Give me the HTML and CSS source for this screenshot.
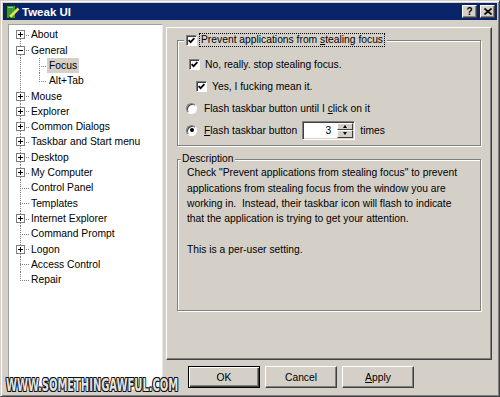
FILE: index.html
```html
<!DOCTYPE html>
<html>
<head>
<meta charset="utf-8">
<link rel="stylesheet" href="styles.css">
</head>
<body>
<div class="window">
  <div class="titlebar">
    <svg class="app-icon" width="16" height="16" viewBox="0 0 16 16">
      <path d="M2.5 1.5h9v13h-9z" fill="#3a9a3a" stroke="#0c3a0c"/>
      <path d="M4 3.5h5" stroke="#8fd88f"/>
      <path d="M6 13 L14.5 4.5" stroke="#e8e050" stroke-width="2.6"/>
      <path d="M4.6 14.8 L5.3 12.3 L7 14z" fill="#222"/>
    </svg>
    <span class="title">Tweak UI</span>
    <span class="tbtn help">?</span>
    <span class="tbtn close"><svg width="8" height="7" viewBox="0 0 8 7"><path d="M0.5 0.5L7.5 6.5M7.5 0.5L0.5 6.5" stroke="#000" stroke-width="1.6"/></svg></span>
  </div>
  <div class="main">
    <div class="tree">
      <div class="node"><span class="tw first"><span class="box"><svg width="7" height="7"><path d="M1 3.5H6M3.5 1V6" stroke="#000"/></svg></span></span><span class="lbl">About</span></div>
      <div class="node"><span class="tw"><span class="box"><svg width="7" height="7"><path d="M1 3.5H6" stroke="#000"/></svg></span></span><span class="lbl">General</span></div>
      <div class="node"><span class="tw vonly"></span><span class="tw2"></span><span class="lbl sel">Focus</span></div>
      <div class="node"><span class="tw vonly"></span><span class="tw2 last"></span><span class="lbl">Alt+Tab</span></div>
      <div class="node"><span class="tw"><span class="box"><svg width="7" height="7"><path d="M1 3.5H6M3.5 1V6" stroke="#000"/></svg></span></span><span class="lbl">Mouse</span></div>
      <div class="node"><span class="tw"><span class="box"><svg width="7" height="7"><path d="M1 3.5H6M3.5 1V6" stroke="#000"/></svg></span></span><span class="lbl">Explorer</span></div>
      <div class="node"><span class="tw"><span class="box"><svg width="7" height="7"><path d="M1 3.5H6M3.5 1V6" stroke="#000"/></svg></span></span><span class="lbl">Common Dialogs</span></div>
      <div class="node"><span class="tw"><span class="box"><svg width="7" height="7"><path d="M1 3.5H6M3.5 1V6" stroke="#000"/></svg></span></span><span class="lbl">Taskbar and Start menu</span></div>
      <div class="node"><span class="tw"><span class="box"><svg width="7" height="7"><path d="M1 3.5H6M3.5 1V6" stroke="#000"/></svg></span></span><span class="lbl">Desktop</span></div>
      <div class="node"><span class="tw"><span class="box"><svg width="7" height="7"><path d="M1 3.5H6M3.5 1V6" stroke="#000"/></svg></span></span><span class="lbl">My Computer</span></div>
      <div class="node"><span class="tw"></span><span class="lbl">Control Panel</span></div>
      <div class="node"><span class="tw"></span><span class="lbl">Templates</span></div>
      <div class="node"><span class="tw"><span class="box"><svg width="7" height="7"><path d="M1 3.5H6M3.5 1V6" stroke="#000"/></svg></span></span><span class="lbl">Internet Explorer</span></div>
      <div class="node"><span class="tw"></span><span class="lbl">Command Prompt</span></div>
      <div class="node"><span class="tw"><span class="box"><svg width="7" height="7"><path d="M1 3.5H6M3.5 1V6" stroke="#000"/></svg></span></span><span class="lbl">Logon</span></div>
      <div class="node"><span class="tw"></span><span class="lbl">Access Control</span></div>
      <div class="node"><span class="tw last"></span><span class="lbl">Repair</span></div>
    </div>
    <div class="right">
      <div class="pane">
        <div class="group g1">
          <div class="gtitle">
            <span class="cb"><svg width="7" height="7" viewBox="0 0 7 7"><path d="M0.6 3.2L2.6 5.2L6.4 1.2" fill="none" stroke="#000" stroke-width="1.7"/></svg></span>
            <span class="focus">Prevent applications from <u>s</u>tealing focus</span>
          </div>
          <div class="opts">
            <div class="opt i1"><span class="cb"><svg width="7" height="7" viewBox="0 0 7 7"><path d="M0.6 3.2L2.6 5.2L6.4 1.2" fill="none" stroke="#000" stroke-width="1.7"/></svg></span><span class="olbl">No, really. stop stealing focus.</span></div>
            <div class="opt i2"><span class="cb"><svg width="7" height="7" viewBox="0 0 7 7"><path d="M0.6 3.2L2.6 5.2L6.4 1.2" fill="none" stroke="#000" stroke-width="1.7"/></svg></span><span class="olbl">Yes, I fucking mean it.</span></div>
            <div class="opt r"><span class="rb"></span><span class="rlbl">Flash taskbar button until I <u>c</u>lick on it</span></div>
            <div class="opt r"><span class="rb on"><span class="dot"></span></span><span class="rlbl"><u>F</u>lash taskbar button</span>
              <span class="spin"><span class="spin-val">3</span><span class="spin-btns"><span class="sb"><span class="up"></span></span><span class="sb"><span class="down"></span></span></span></span>
              <span class="times">times</span>
            </div>
          </div>
        </div>
        <div class="group g2">
          <div class="gtitle dtitle">Description</div>
          <div class="desc">Check "Prevent applications from stealing focus" to prevent<br>applications from stealing focus from the window you are<br>working in.&nbsp; Instead, their taskbar icon will flash to indicate<br>that the application is trying to get your attention.<br><br>This is a per-user setting.</div>
        </div>
      </div>
      <div class="actions">
        <span class="btn default">OK</span>
        <span class="btn">Cancel</span>
        <span class="btn"><span><u>A</u>pply</span></span>
      </div>
    </div>
  </div>
  <div class="watermark">WWW.SOMETHINGAWFUL.COM</div>
</div>
</body>
</html>
```
FILE: styles.css
```css
body {
  margin: 0;
}
.window {
  width: 500px;
  height: 397px;
  box-sizing: border-box;
  background: #d4d0c8;
  border: 1px solid;
  border-color: #d4d0c8 #404040 #404040 #d4d0c8;
  box-shadow: inset 1px 1px #fff, inset -1px -1px #808080;
  padding: 2px;
  position: relative;
  font-family: "Liberation Sans", Arial, sans-serif;
  font-size: 10.3px;
  color: #000;
  display: flex;
  flex-direction: column;
  overflow: hidden;
}
.titlebar {
  height: 17px;
  background: #0a246a;
  display: flex;
  align-items: center;
  padding: 0 2px 0 1px;
  color: #fff;
  flex: none;
}
.app-icon {
  margin-right: 2px;
  flex: none;
}
.title {
  font-weight: bold;
  font-size: 11.5px;
  flex: 1;
}
.tbtn {
  width: 15px;
  height: 13px;
  box-sizing: border-box;
  background: #d4d0c8;
  border: 1px solid;
  border-color: #fff #404040 #404040 #fff;
  box-shadow: inset -1px -1px #808080;
  display: flex;
  align-items: center;
  justify-content: center;
  color: #000;
  font-weight: bold;
  font-size: 10px;
  line-height: 1;
}
.help {
  margin-right: 3px;
}
.main {
  display: flex;
  gap: 3px;
  margin-top: 4px;
  flex: 1;
}
.tree {
  width: 155px;
  height: 366px;
  box-sizing: border-box;
  background: #fff;
  border: 1px solid;
  border-color: #a0a0a0 #e8e8e8 #e8e8e8 #a0a0a0;
  margin-left: 5px;
  padding-top: 2.35px;
}
.node {
  display: flex;
  height: 15.3px;
  white-space: nowrap;
}
.tw, .tw2 {
  position: relative;
  width: 17px;
  flex: none;
}
.tw {
  margin-left: 3px;
}
.tw2 {
  width: 18px;
}
.tw::before, .tw2::before {
  content: "";
  position: absolute;
  left: 8px;
  top: 0;
  bottom: 0;
  width: 1px;
  background: repeating-linear-gradient(to bottom, #808080 0 1px, transparent 1px 2px);
}
.tw2::before {
  left: 10px;
}
.tw.first::before {
  top: 50%;
}
.tw.last::before, .tw2.last::before {
  bottom: 50%;
}
.tw::after, .tw2::after {
  content: "";
  position: absolute;
  left: 8px;
  top: 50%;
  width: 9px;
  height: 1px;
  background: repeating-linear-gradient(to right, #808080 0 1px, transparent 1px 2px);
}
.tw2::after {
  left: 10px;
  width: 8px;
}
.tw.vonly::after {
  display: none;
}
.box {
  position: absolute;
  left: 4px;
  top: 3px;
  width: 9px;
  height: 9px;
  box-sizing: border-box;
  border: 1px solid #808080;
  background: #fff;
  z-index: 1;
  display: block;
}
.box svg {
  display: block;
  shape-rendering: crispEdges;
}
.lbl {
  padding: 0 2px;
  line-height: 15.3px;
}
.lbl.sel {
  background: #d4d0c8;
}
.right {
  display: flex;
  flex-direction: column;
  width: 326px;
  margin-top: 3px;
}
.pane {
  height: 333px;
  box-sizing: border-box;
  border: 1px solid;
  border-color: #fff #404040 #404040 #fff;
  box-shadow: inset -1px -1px #808080;
  padding: 12px 0 0 10px;
}
.group {
  position: relative;
  width: 304px;
  box-sizing: border-box;
  border: 1px solid #808080;
  box-shadow: inset 1px 1px #fff, 1px 1px #fff;
}
.g1 {
  height: 106px;
}
.g2 {
  height: 152px;
  margin-top: 13px;
}
.gtitle {
  position: absolute;
  top: -8px;
  left: 6px;
  height: 14px;
  padding: 0 2px;
  background: #d4d0c8;
  display: flex;
  align-items: center;
}
.gtitle .cb {
  margin-right: 2px;
}
.focus {
  border: 1px dotted #000;
  padding: 0 1px;
  line-height: 12px;
}
.dtitle {
  left: 3px;
  padding: 0 1px;
  line-height: 14px;
}
.cb {
  width: 11px;
  height: 11px;
  box-sizing: border-box;
  background: #fff;
  border: 1px solid;
  border-color: #808080 #fff #fff #808080;
  box-shadow: inset 1px 1px #404040;
  display: flex;
  align-items: center;
  justify-content: center;
  flex: none;
}
.cb svg {
  display: block;
}
.opts {
  padding-top: 13.15px;
  display: flex;
  flex-direction: column;
}
.opt {
  height: 21.7px;
  display: flex;
  align-items: center;
  white-space: nowrap;
}
.opt.i1 {
  padding-left: 11px;
}
.opt.i2 {
  padding-left: 18px;
}
.opt.r {
  padding-left: 8px;
}
.olbl {
  margin-left: 5px;
}
.rlbl {
  margin-left: 7px;
}
.rb {
  width: 11px;
  height: 11px;
  box-sizing: border-box;
  border-radius: 50%;
  background: #fff;
  border: 1px solid;
  border-color: #808080 #fff #fff #808080;
  box-shadow: inset 1px 1px #404040;
  display: flex;
  align-items: center;
  justify-content: center;
  flex: none;
}
.dot {
  width: 4px;
  height: 4px;
  border-radius: 50%;
  background: #000;
}
.spin {
  display: flex;
  width: 53px;
  height: 19px;
  box-sizing: border-box;
  background: #fff;
  border: 1px solid;
  border-color: #808080 #fff #fff #808080;
  box-shadow: inset 1px 1px #404040, inset -1px -1px #d4d0c8;
  margin-left: 5px;
  padding: 1px 1px 1px 2px;
}
.spin-val {
  flex: 1;
  text-align: right;
  padding-right: 6px;
  line-height: 15px;
}
.spin-btns {
  width: 16px;
  display: flex;
  flex-direction: column;
}
.sb {
  flex: 1;
  background: #d4d0c8;
  box-sizing: border-box;
  border: 1px solid;
  border-color: #fff #404040 #404040 #fff;
  display: flex;
  align-items: center;
  justify-content: center;
}
.up {
  width: 0;
  height: 0;
  border-left: 2.5px solid transparent;
  border-right: 2.5px solid transparent;
  border-bottom: 3px solid #000;
}
.down {
  width: 0;
  height: 0;
  border-left: 2.5px solid transparent;
  border-right: 2.5px solid transparent;
  border-top: 3px solid #000;
}
.times {
  margin-left: 5px;
}
.desc {
  padding: 5.35px 0 0 9px;
  line-height: 15.3px;
  white-space: nowrap;
}
.actions {
  display: flex;
  gap: 5px;
  padding-left: 22px;
  margin-top: 6px;
}
.btn {
  width: 72px;
  height: 22px;
  box-sizing: border-box;
  border: 1px solid;
  border-color: #fff #404040 #404040 #fff;
  box-shadow: inset -1px -1px #808080;
  display: flex;
  align-items: center;
  justify-content: center;
}
.btn.default {
  border: 1px solid #000;
  box-shadow: inset 1px 1px #fff, inset -1px -1px #404040, inset -2px -2px #808080;
}
.watermark {
  position: absolute;
  left: 5px;
  top: 376px;
  font-family: "DejaVu Sans Condensed", "DejaVu Sans", sans-serif;
  font-weight: bold;
  font-size: 17px;
  line-height: 1;
  color: #e4e4e4;
  white-space: nowrap;
  transform: scaleX(0.65);
  transform-origin: left top;
  text-shadow: 1px 0 #111, -1px 0 #111, 0 1px #111, 0 -1px #111, 1px 1px #111, -1px -1px #111, 1px -1px #111, -1px 1px #111;
}
```
